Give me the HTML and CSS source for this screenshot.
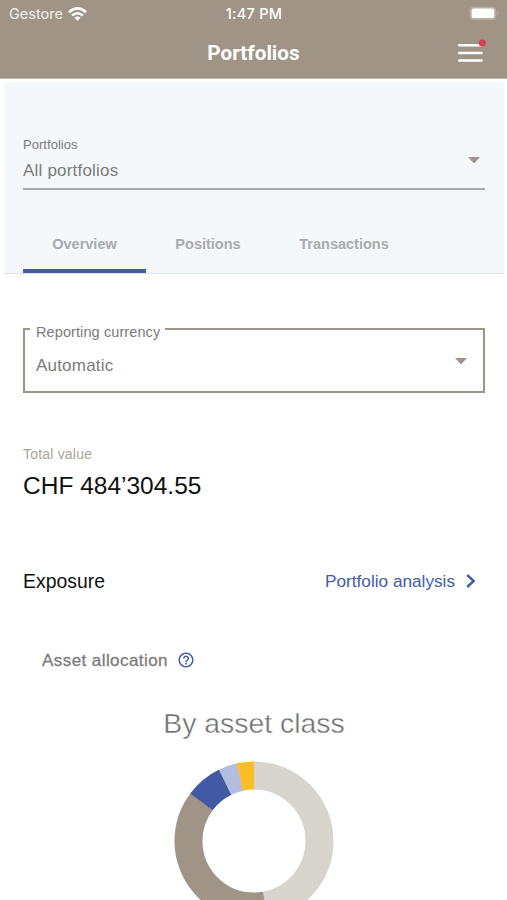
FILE: index.html
```html
<!DOCTYPE html>
<html lang="en">
<head>
<meta charset="utf-8">
<title>Portfolios</title>
<link rel="stylesheet" href="styles.css">
</head>
<body>
<header class="header">
  <div class="status">
    <div class="carrier"><span>Gestore</span>
      <svg width="19" height="14" viewBox="0 0 19 14" fill="none" stroke="#fff" stroke-width="2.6"><path d="M1 5.2Q9.5-2.3 18 5.2"/><path d="M4.1 8.6Q9.5 3.9 14.9 8.6"/><path d="M9.5 13.8L6.400 10.700Q9.5 8.2 12.600 10.700Z" fill="#fff" stroke="none"/></svg>
    </div>
    <time class="time">1:47 PM</time>
    <svg class="battery" width="31" height="15" viewBox="0 0 31 15"><rect x=".7" y=".7" width="26.6" height="13.2" rx="4" fill="#b8aea2"/><rect x="2.7" y="2.5" width="22.5" height="9.5" rx="2" fill="#fff"/><path d="M28.3 4.8Q31 7.3 28.3 9.8Z" fill="#b8aea2"/></svg>
  </div>
  <div class="titlebar">
    <h1 class="title">Portfolios</h1>
    <svg class="menu" width="30" height="26" viewBox="0 0 30 26"><path d="M3.200 7.300H25.500M3.200 14.900H25.500M3.200 22.500H25.500" stroke="#fff" stroke-width="2.5" stroke-linecap="round"/><circle cx="26.300" cy="5" r="3.600" fill="#da3c5b"/></svg>
  </div>
</header>
<section class="selector">
  <div class="portfolio-field">
    <div>
      <div class="field-label">Portfolios</div>
      <div class="field-value">All portfolios</div>
    </div>
    <svg class="caret" width="12" height="7" viewBox="0 0 12 7"><path d="M0 0H12L6 6.6Z"/></svg>
  </div>
  <nav class="tabs">
    <a class="tab active">Overview</a>
    <a class="tab positions">Positions</a>
    <a class="tab transactions">Transactions</a>
  </nav>
</section>
<main class="content">
  <fieldset class="currency">
    <legend>Reporting currency</legend>
    <div class="currency-row"><span class="field-value">Automatic</span>
      <svg class="caret" width="12" height="7" viewBox="0 0 12 7"><path d="M0 0H12L6 6.6Z"/></svg>
    </div>
  </fieldset>
  <div class="total-label">Total value</div>
  <div class="total">CHF 484’304.55</div>
  <div class="exposure">
    <h2>Exposure</h2>
    <a class="link">Portfolio analysis
      <svg width="10" height="14" viewBox="0 0 10 14" fill="none" stroke="#435ba8" stroke-width="2.4"><path d="M1.200 1L7.700 7L1.200 13"/></svg>
    </a>
  </div>
  <div class="allocation"><span>Asset allocation</span>
    <svg width="18" height="18" viewBox="0 0 24 24" fill="#435ba8"><path d="M11 18h2v-2h-2v2zm1-16C6.480 2 2 6.480 2 12s4.480 10 10 10 10-4.480 10-10S17.520 2 12 2zm0 18c-4.410 0-8-3.590-8-8s3.590-8 8-8 8 3.590 8 8-3.590 8-8 8zm0-14c-2.210 0-4 1.790-4 4h2c0-1.100.9-2 2-2s2 .9 2 2c0 2-3 1.750-3 5h2c0-2.250 3-2.500 3-5 0-2.210-1.790-4-4-4z"/></svg>
  </div>
  <h3 class="chart-title">By asset class</h3>
  <svg class="donut" width="160" height="160" viewBox="-80 -80 160 160">
    <g fill="none" stroke-width="28" transform="rotate(-90)">
      <circle r="65.500" pathLength="360" stroke="#d8d4ce" stroke-dasharray="170.300 360"/>
      <circle r="65.500" pathLength="360" stroke="#9f9485" stroke-dasharray="137 360" stroke-dashoffset="-170"/>
      <circle r="65.500" pathLength="360" stroke="#425aa6" stroke-dasharray="27.300 360" stroke-dashoffset="-306.700"/>
      <circle r="65.500" pathLength="360" stroke="#b3bddd" stroke-dasharray="13.900 360" stroke-dashoffset="-333.800"/>
      <circle r="65.500" pathLength="360" stroke="#fabd25" stroke-dasharray="12.500 360" stroke-dashoffset="-347.500"/>
    </g>
  </svg>
</main>
</body>
</html>
```
FILE: styles.css
```css
* { box-sizing: border-box; }
html { height: 900px; overflow: hidden; }
body {
  margin: 0;
  height: 900px;
  overflow: hidden;
  background: #fff;
  font-family: "Liberation Sans", sans-serif;
  color: #7b7b7b;
}
svg { display: block; flex: none; }
h1, h2, h3 { margin: 0; font-weight: 400; }
.header { height: 79px; background: #9f9485; color: #fff; border-bottom: 1px solid #c9bdb3; }
.status {
  display: grid;
  grid-template-columns: 1fr auto 1fr;
  align-items: center;
  height: 28px;
  padding: 0 7px 0 9px;
  font-family: Inter, sans-serif;
  font-size: 14.5px;
  line-height: 28px;
}
.carrier { display: flex; align-items: center; gap: 5px; color: #f3f0ec; }
.carrier svg { margin-top: -1px; }
.time { padding-right: 1px; font-weight: 500; letter-spacing: .25px; }
.battery { justify-self: end; margin-top: -1px; }
.titlebar {
  display: grid;
  grid-template-columns: 1fr auto 1fr;
  align-items: center;
  height: 50px;
  padding: 0 21px;
}
.title {
  grid-column: 2;
  font: 700 20.7px/50px Roboto, sans-serif;
}
.menu { justify-self: end; margin-top: -5px; }
.selector {
  height: 192px;
  margin: 3px 3px 0 4px;
  padding: 53px 19px 0;
  background: #f4f8fa;
  border-bottom: 1px solid #dfe2e3;
}
.portfolio-field {
  display: flex;
  justify-content: space-between;
  height: 55px;
  border-bottom: 2px solid #a6a8a9;
}
.portfolio-field .caret { margin: 22px 5px 0 0; }
.caret { fill: #9f9485; }
.field-label { font-size: 13px; line-height: 19px; letter-spacing: .04px; }
.field-value { font-size: 17px; line-height: 34px; letter-spacing: .2px; }
.tabs { display: flex; height: 83px; }
.tab {
  width: 123px;
  height: 83px;
  color: #a9abad;
  font-size: 14.5px;
  font-weight: 700;
  line-height: 108px;
  text-align: center;
}
.tab.positions { padding-left: 1px; }
.tab.transactions { width: 150px; }
.tab.active { border-bottom: 4px solid #435ba8; }
.content { padding: 0 22px 0 23px; }
.currency {
  height: 69px;
  margin: 50px 0 0;
  padding: 0 16px 0 11px;
  border: 2px solid #9f9485;
}
.currency legend {
  height: 10px;
  margin-left: -6px;
  padding: 0 5px 0 6px;
  font-size: 14.5px;
  line-height: 16px;
  letter-spacing: .1px;
}
.currency-row { display: flex; justify-content: space-between; align-items: flex-start; padding-top: 15px; }
.currency-row .caret { margin-top: 9px; }
.total-label { margin-top: 51px; color: #aaa39a; font-size: 14px; line-height: 20px; letter-spacing: .2px; }
.total { margin-top: 6px; color: #111; font-size: 24.5px; line-height: 32px; }
.exposure { display: flex; justify-content: space-between; align-items: center; margin-top: 64px; height: 30px; }
.exposure h2 { color: #111; font-size: 19.4px; }
.link { display: flex; align-items: center; gap: 11px; margin-right: 9px; color: #435ba8; font-size: 17.2px; }
.allocation {
  display: flex;
  align-items: center;
  gap: 9px;
  height: 30px;
  margin: 49px 0 0 19px;
  font-size: 17px;
  letter-spacing: .43px;
  -webkit-text-stroke: .3px #7b7b7b;
}
.allocation span { padding-top: 2px; }
.allocation svg { stroke: none; }
.chart-title {
  margin-top: 28px;
  color: #707070;
  font-size: 28.4px;
  line-height: 40px;
  text-align: center;
  -webkit-text-stroke: .4px #fff;
}
.donut { margin: 18px auto 0; }
```
